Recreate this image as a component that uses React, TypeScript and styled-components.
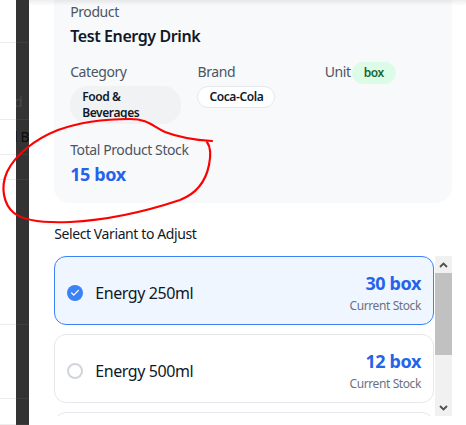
import styled, { createGlobalStyle, css } from 'styled-components';

const GlobalStyle = createGlobalStyle`
  html, body {
    margin: 0;
    padding: 0;
    width: 466px;
    height: 425px;
    overflow: hidden;
    background: #fff;
  }
  body {
    font-family: "Noto Sans", "Liberation Sans", sans-serif;
    letter-spacing: -0.025em;
    color: #111827;
  }
  * { box-sizing: border-box; }
`;

type Variant = { name: string; stock: number; selected?: boolean };

const variants: Variant[] = [
  { name: 'Energy 250ml', stock: 30, selected: true },
  { name: 'Energy 500ml', stock: 12 },
  { name: 'Energy 1L', stock: 5 },
];

// rows of the page table that shows behind the drawer
const pageRows: { h: number; text?: string; tone?: 'faint' | 'dark' }[] = [
  { h: 43 },
  { h: 77, text: 'd', tone: 'faint' },
  { h: 35, text: 'l B', tone: 'dark' },
  { h: 25 },
  { h: 145 },
  { h: 74 },
  { h: 26 },
];

const LIST_HEIGHT = 160;
const CONTENT_HEIGHT = 246;
const ARROW = 17;

export default function App() {
  const trackLen = LIST_HEIGHT - ARROW * 2;
  const thumbLen = Math.round((trackLen * LIST_HEIGHT) / CONTENT_HEIGHT);

  return (
    <>
      <GlobalStyle />
      <Screen>
        <Backdrop>
          <PageColumn>
            {pageRows.map((r, i) => (
              <PageRow key={i} style={{ height: r.h }} />
            ))}
          </PageColumn>
          <DimColumn>
            {pageRows.map((r, i) => (
              <DimRow key={i} style={{ height: r.h }}>
                {r.text && <DimText tone={r.tone}>{r.text}</DimText>}
              </DimRow>
            ))}
          </DimColumn>
        </Backdrop>

        <Panel>
          <InfoCard>
            <Label>Product</Label>
            <Title>Test Energy Drink</Title>

            <MetaGrid>
              <Field>
                <Label>Category</Label>
                <Badge tone="gray">Food &amp; Beverages</Badge>
              </Field>
              <Field>
                <Label>Brand</Label>
                <Badge tone="outline">Coca-Cola</Badge>
              </Field>
              <UnitField>
                <Label>Unit</Label>
                <Badge tone="green">box</Badge>
              </UnitField>
            </MetaGrid>

            <TotalField>
              <Label>Total Product Stock</Label>
              <TotalValue>15 box</TotalValue>
            </TotalField>
          </InfoCard>

          <SectionTitle>Select Variant to Adjust</SectionTitle>

          <ListFrame>
            <ListViewport>
              {variants.map((v) => (
                <VariantCard key={v.name} selected={v.selected}>
                  <VariantLeft>
                    <Radio selected={v.selected}>
                      {v.selected && (
                        <svg width="10" height="10" viewBox="0 0 24 24" fill="none" stroke="#fff" strokeWidth="3" strokeLinecap="round" strokeLinejoin="round">
                          <path d="M20 6 9 17l-5-5" />
                        </svg>
                      )}
                    </Radio>
                    <VariantName>{v.name}</VariantName>
                  </VariantLeft>
                  <VariantStock>
                    <StockNumber>{v.stock} box</StockNumber>
                    <StockCaption>Current Stock</StockCaption>
                  </VariantStock>
                </VariantCard>
              ))}
            </ListViewport>
            <ScrollRail>
              <ScrollArrow>
                <svg width="9" height="6" viewBox="0 0 9 6">
                  <path d="M1 5 4.5 1.5 8 5" fill="none" stroke="#505050" strokeWidth="1.8" />
                </svg>
              </ScrollArrow>
              <ScrollTrack>
                <ScrollThumb style={{ height: thumbLen }} />
              </ScrollTrack>
              <ScrollArrow>
                <svg width="9" height="6" viewBox="0 0 9 6">
                  <path d="M1 1 4.5 4.5 8 1" fill="none" stroke="#505050" strokeWidth="1.8" />
                </svg>
              </ScrollArrow>
            </ScrollRail>
          </ListFrame>
          <TopShade />
        </Panel>

        <Annotation width="466" height="425" viewBox="0 0 466 425">
          <path
            d="M 212 141 C 195 140, 178 137, 165 132 C 152 126, 148 119, 130 119 C 105 119, 80 122, 58 130 C 35 139, 15 155, 7 172 C 0 188, 4 205, 14 213 C 24 221, 45 223, 70 222 C 110 220, 150 210, 180 200 C 198 193, 206 180, 209 165 C 211 155, 210 146, 207 142"
            fill="none"
            stroke="#f00"
            strokeWidth="2.2"
            strokeLinecap="round"
          />
        </Annotation>
      </Screen>
    </>
  );
}

const Screen = styled.div`
  position: relative;
  display: flex;
  width: 466px;
  height: 425px;
  overflow: hidden;
`;

const Backdrop = styled.div`
  flex: 0 0 29px;
  display: flex;
`;

const PageColumn = styled.div`
  flex: 0 0 16px;
  background: #fff;
  display: flex;
  flex-direction: column;
`;

const PageRow = styled.div`
  flex-shrink: 0;
  border-bottom: 1px solid #ededed;
`;

const DimColumn = styled.div`
  flex: 0 0 13px;
  background: #333;
  display: flex;
  flex-direction: column;
`;

const DimRow = styled.div`
  flex-shrink: 0;
  border-bottom: 1px solid #3e3e3e;
  display: flex;
  align-items: flex-end;
  overflow: hidden;
  white-space: nowrap;
`;

const DimText = styled.span<{ tone?: 'faint' | 'dark' }>`
  font-size: 14px;
  line-height: 20px;
  margin-left: -2px;
  margin-bottom: 7px;
  color: ${({ tone }) => (tone === 'faint' ? '#4a4a4a' : '#0c0c0c')};
`;

const Panel = styled.div`
  position: relative;
  flex: 1;
  min-width: 0;
  background: #fff;
  padding: 0 14px 0 25px;
  display: flex;
  flex-direction: column;
`;

const TopShade = styled.div`
  position: absolute;
  top: 0;
  left: 0;
  right: 0;
  height: 6px;
  background: linear-gradient(rgba(0, 0, 0, 0.07), rgba(0, 0, 0, 0));
  pointer-events: none;
`;

const InfoCard = styled.div`
  background: #f8f9fb;
  border-radius: 0 0 16px 16px;
  padding: 2px 16px 17px;
`;

const Label = styled.div`
  font-size: 14px;
  line-height: 20px;
  color: #4b5563;
`;

const Title = styled.div`
  margin-top: 2px;
  font-size: 16px;
  line-height: 24px;
  font-weight: 600;
  color: #111827;
`;

const MetaGrid = styled.div`
  margin-top: 14px;
  display: grid;
  grid-template-columns: repeat(3, 1fr);
  column-gap: 16px;
`;

const Field = styled.div`
  display: flex;
  flex-direction: column;
  align-items: flex-start;
  gap: 4px;
`;

const UnitField = styled.div`
  display: flex;
  align-items: flex-start;
  gap: 1px;
`;

const badgeTones = {
  gray: css`
    background: #f1f2f4;
    color: #111827;
    border: 1px solid #f1f2f4;
    border-radius: 18px;
    width: 100%;
  `,
  outline: css`
    background: #fff;
    color: #111827;
    border: 1px solid #e5e7eb;
  `,
  green: css`
    background: #dcfce7;
    color: #166534;
    border: 1px solid #dcfce7;
  `,
};

const Badge = styled.span<{ tone: keyof typeof badgeTones }>`
  display: inline-block;
  padding: 2px 11px;
  border-radius: 999px;
  font-size: 12px;
  line-height: 16px;
  font-weight: 600;
  ${({ tone }) => badgeTones[tone]}
`;

const TotalField = styled.div`
  margin-top: 16px;
`;

const TotalValue = styled.div`
  margin-top: 2px;
  font-size: 18px;
  line-height: 24px;
  font-weight: 700;
  color: #2563eb;
`;

const SectionTitle = styled.div`
  margin-top: 21px;
  font-size: 14px;
  line-height: 20px;
  color: #111827;
`;

const ListFrame = styled.div`
  margin-top: 12px;
  height: ${LIST_HEIGHT}px;
  display: flex;
`;

const ListViewport = styled.div`
  flex: 1;
  min-width: 0;
  overflow: hidden;
  padding-right: 1px;
  display: flex;
  flex-direction: column;
  gap: 9px;
`;

const ScrollRail = styled.div`
  flex: 0 0 ${ARROW}px;
  background: #f1f1f1;
  display: flex;
  flex-direction: column;
`;

const ScrollArrow = styled.div`
  height: ${ARROW}px;
  display: flex;
  align-items: center;
  justify-content: center;
`;

const ScrollTrack = styled.div`
  flex: 1;
`;

const ScrollThumb = styled.div`
  background: #c1c1c1;
`;

const VariantCard = styled.div<{ selected?: boolean }>`
  flex-shrink: 0;
  height: 69px;
  display: flex;
  align-items: center;
  justify-content: space-between;
  padding: 14px 12px 10px;
  border-radius: 12px;
  border: 1px solid ${({ selected }) => (selected ? '#3b82f6' : '#e5e7eb')};
  background: ${({ selected }) => (selected ? '#eff6ff' : '#fff')};
`;

const VariantLeft = styled.div`
  display: flex;
  align-items: center;
  gap: 12px;
`;

const Radio = styled.span<{ selected?: boolean }>`
  width: 16px;
  height: 16px;
  border-radius: 50%;
  display: inline-flex;
  align-items: center;
  justify-content: center;
  ${({ selected }) =>
    selected
      ? css`
          background: #3b82f6;
        `
      : css`
          border: 2px solid #d1d5db;
          background: #fff;
        `}
`;

const VariantName = styled.span`
  font-size: 16px;
  line-height: 24px;
  color: #111827;
`;

const VariantStock = styled.div`
  display: flex;
  flex-direction: column;
  align-items: flex-end;
`;

const StockNumber = styled.div`
  font-size: 18px;
  line-height: 24px;
  font-weight: 700;
  color: #2563eb;
`;

const StockCaption = styled.div`
  margin-top: 3px;
  font-size: 12px;
  line-height: 16px;
  color: #6b7280;
`;

const Annotation = styled.svg`
  position: absolute;
  top: 0;
  left: 0;
  pointer-events: none;
`;
